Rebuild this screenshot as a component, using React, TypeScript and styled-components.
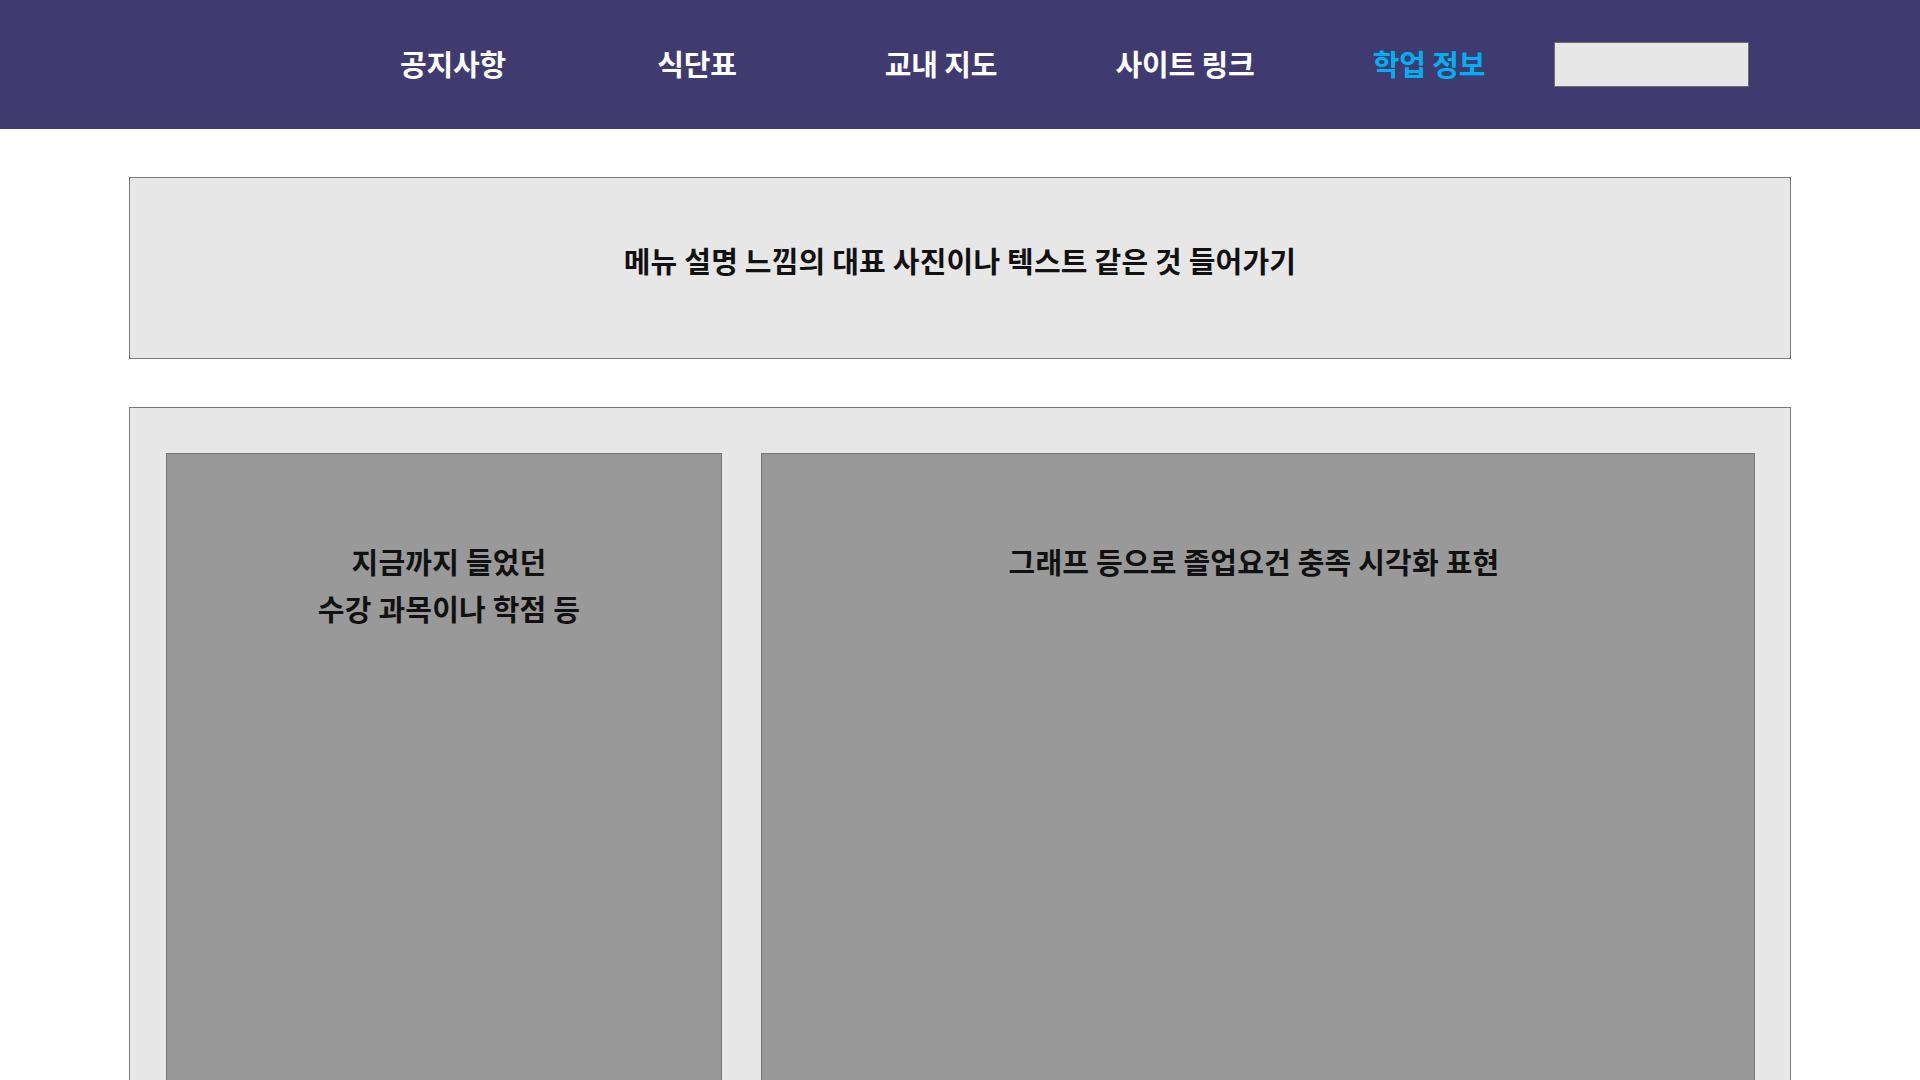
import React from "react";
import styled, { createGlobalStyle } from "styled-components";

const GlobalStyle = createGlobalStyle`
  html, body {
    margin: 0;
    padding: 0;
    background: #ffffff;
    font-family: "Noto Sans CJK KR", "Noto Sans", sans-serif;
    color: #111111;
  }
  * { box-sizing: border-box; }
`;

const Header = styled.header`
  height: 129px;
  background: #3f3a6f;
  display: flex;
  align-items: center;
  padding-left: 331px;
`;

const NavItem = styled.a<{ $active?: boolean }>`
  width: 244px;
  text-align: center;
  font-size: 29px;
  font-weight: 700;
  letter-spacing: -0.2px;
  color: ${(p) => (p.$active ? "#00b0f0" : "#ffffff")};
  text-decoration: none;
  cursor: pointer;
  margin-top: -4px;
`;

const SearchBox = styled.input`
  margin-left: 3px;
  width: 195px;
  height: 45px;
  background: #e7e7e7;
  border: 1px solid #6e6e6e;
  outline: none;
  padding: 0 8px;
  font-family: inherit;
  font-size: 16px;
`;

const Main = styled.main`
  padding: 48px 129px 0;
  display: flex;
  flex-direction: column;
  gap: 48px;
`;

const Banner = styled.section`
  height: 182px;
  background: #e7e7e7;
  border: 1px solid #767676;
  display: flex;
  justify-content: center;
  padding-top: 48px;
`;

const BannerText = styled.p`
  margin: 0;
  font-size: 29px;
  font-weight: 600;
  line-height: 68px;
  letter-spacing: 0.2px;
`;

const Board = styled.section`
  background: #e7e7e7;
  border: 1px solid #767676;
  border-bottom: none;
  display: flex;
  gap: 39px;
  padding: 45px 35px 0 36px;
`;

const Panel = styled.div<{ $width?: number; $shift?: number }>`
  ${(p) => (p.$width ? `width: ${p.$width}px; flex: none;` : "flex: 1;")}
  height: 700px;
  background: #999999;
  border: 1px solid #767676;
  border-bottom: none;
  padding-top: 84px;
  padding-left: ${(p) => Math.max(0, p.$shift ?? 0) * 2}px;
  padding-right: ${(p) => Math.max(0, -(p.$shift ?? 0)) * 2}px;
  display: flex;
  flex-direction: column;
  align-items: center;
`;

const PanelText = styled.p`
  margin: 0;
  text-align: center;
  font-size: 29px;
  font-weight: 600;
  line-height: 47px;
  letter-spacing: 0.2px;
`;

export default function App() {
  const nav = ["공지사항", "식단표", "교내 지도", "사이트 링크", "학업 정보"];
  return (
    <>
      <GlobalStyle />
      <Header>
        {nav.map((n, i) => (
          <NavItem key={n} $active={i === nav.length - 1}>
            {n}
          </NavItem>
        ))}
        <SearchBox aria-label="검색" />
      </Header>
      <Main>
        <Banner>
          <BannerText>메뉴 설명 느낌의 대표 사진이나 텍스트 같은 것 들어가기</BannerText>
        </Banner>
        <Board>
          <Panel $width={556} $shift={5}>
            <PanelText>
              지금까지 들었던
              <br />
              수강 과목이나 학점 등
            </PanelText>
          </Panel>
          <Panel $shift={-4}>
            <PanelText>그래프 등으로 졸업요건 충족 시각화 표현</PanelText>
          </Panel>
        </Board>
      </Main>
    </>
  );
}
